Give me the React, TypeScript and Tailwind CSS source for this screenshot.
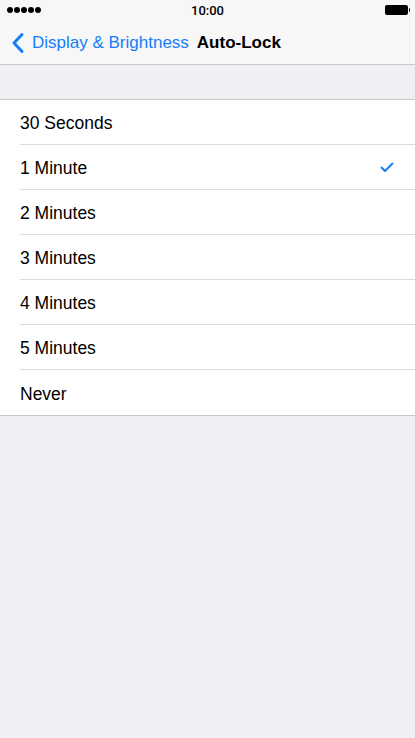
const options = [
  "30 Seconds",
  "1 Minute",
  "2 Minutes",
  "3 Minutes",
  "4 Minutes",
  "5 Minutes",
  "Never",
];

export default function App() {
  const selected = "1 Minute";
  return (
    <div
      className="flex h-[738px] w-[415px] flex-col overflow-hidden bg-[#efeff4] text-black"
      style={{ fontFamily: '"Liberation Sans", Arial, sans-serif' }}
    >
      {/* status + nav bar */}
      <div className="border-b border-[#c8c7cc] bg-[#f7f7f7]">
        <div className="relative flex h-5 items-center justify-between pl-[7px] pr-[5px]">
          <div className="flex gap-[1.5px]">
            {[0, 1, 2, 3, 4].map((i) => (
              <span key={i} className="h-[5.5px] w-[5.5px] rounded-full bg-black" />
            ))}
          </div>
          <span className="absolute left-1/2 top-[1px] -translate-x-1/2 font-['Roboto'] text-[13px] font-medium">
            10:00
          </span>
          <div className="flex items-center">
            <span className="h-[10px] w-[23px] rounded-[2px] bg-black" />
            <span className="ml-[1px] h-[4px] w-[1.5px] rounded-r bg-black" />
          </div>
        </div>
        <div className="flex h-[44px] items-center pt-[1px]">
          <svg width="32" height="24" viewBox="0 0 32 24" className="shrink-0">
            <path
              d="M22 3.5 L14 12 L22 20.5"
              fill="none"
              stroke="#147efb"
              strokeWidth="3"
              strokeLinecap="round"
              strokeLinejoin="round"
            />
          </svg>
          <span className="text-[17px] text-[#147efb]">Display &amp; Brightness</span>
          <span className="ml-[8px] text-[17px] font-bold">Auto-Lock</span>
        </div>
      </div>

      <div className="h-[34px]" />

      <div className="border-y border-[#c8c7cc] bg-white">
        {options.map((o, i) => (
          <div key={o} className="pl-5">
            <div
              className={
                "flex h-[45px] items-center justify-between pr-[21px] " +
                (i < options.length - 1 ? "border-b border-[#dcdbe0]" : "")
              }
            >
              <span className="pt-[3px] text-[17.5px]">{o}</span>
              {o === selected && (
                <svg width="14" height="11" viewBox="0 0 14 11">
                  <path
                    d="M1.5 5.5 L5 9 L12.5 1.5"
                    fill="none"
                    stroke="#147efb"
                    strokeWidth="2"
                    strokeLinecap="round"
                    strokeLinejoin="round"
                  />
                </svg>
              )}
            </div>
          </div>
        ))}
      </div>
    </div>
  );
}
